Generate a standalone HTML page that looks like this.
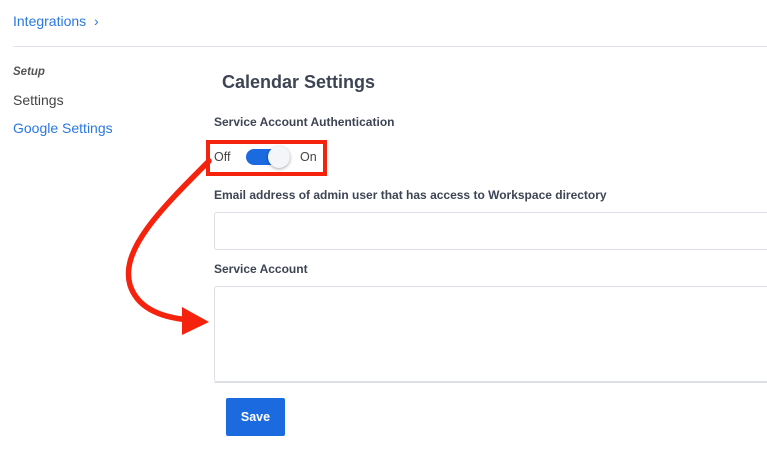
<!DOCTYPE html>
<html><head><style>
body{margin:0;width:767px;height:457px;background:#fff;font-family:"Liberation Sans",sans-serif;position:relative;overflow:hidden}
.a{position:absolute;white-space:nowrap}
.lbl{font-size:12px;font-weight:bold;color:#3d4454}
</style></head><body>
<div class="a" style="left:13px;top:13px;font-size:14px;color:#2a78e0">Integrations &nbsp;›</div>
<div class="a" style="left:13px;top:46px;width:754px;height:1px;background:#dfe3ea"></div>
<div class="a" style="left:13px;top:66px;font-size:11.5px;font-style:italic;font-weight:bold;color:#555">Setup</div>
<div class="a" style="left:13px;top:92px;font-size:14px;color:#444">Settings</div>
<div class="a" style="left:13px;top:120px;font-size:14px;color:#2a78e0">Google Settings</div>
<div class="a" style="left:222px;top:72px;font-size:18px;font-weight:bold;color:#3d4454">Calendar Settings</div>
<div class="a lbl" style="left:214px;top:115px">Service Account Authentication</div>
<div class="a" style="left:206px;top:140px;width:113px;height:28px;border:4px solid #f5230d"></div>
<div class="a" style="left:214px;top:150px;font-size:12.5px;color:#444">Off</div>
<div class="a" style="left:300px;top:150px;font-size:12.5px;color:#444">On</div>
<div class="a" style="left:246px;top:149px;width:44px;height:16px;border-radius:8px;background:#1b6ae0"></div>
<div class="a" style="left:268px;top:146px;width:22px;height:22px;border-radius:50%;background:#f4f5f8;box-shadow:0 1px 3px rgba(0,0,0,.35)"></div>
<div class="a lbl" style="left:214px;top:188px">Email address of admin user that has access to Workspace directory</div>
<div class="a" style="left:214px;top:212px;width:560px;height:36px;border:1px solid #dcdfe6;border-radius:3px"></div>
<div class="a lbl" style="left:214px;top:262px">Service Account</div>
<div class="a" style="left:214px;top:286px;width:560px;height:94px;border:1px solid #dcdfe6;border-radius:3px"></div>
<div class="a" style="left:214px;top:382px;width:560px;height:1px;background:#dcdfe6"></div>
<div class="a" style="left:226px;top:398px;width:59px;height:38px;background:#1b6ae0;border-radius:2px;color:#fff;font-size:12.5px;font-weight:bold;text-align:center;line-height:38px">Save</div>
<svg class="a" style="left:0;top:0" width="767" height="457">
<path d="M209 161 C160 210 120 250 130 285 C138 310 165 318 190 320" fill="none" stroke="#f5230d" stroke-width="5.5" stroke-linecap="round"/>
<polygon points="182,307 209,322 182,335" fill="#f5230d"/>
</svg>
</body></html>
